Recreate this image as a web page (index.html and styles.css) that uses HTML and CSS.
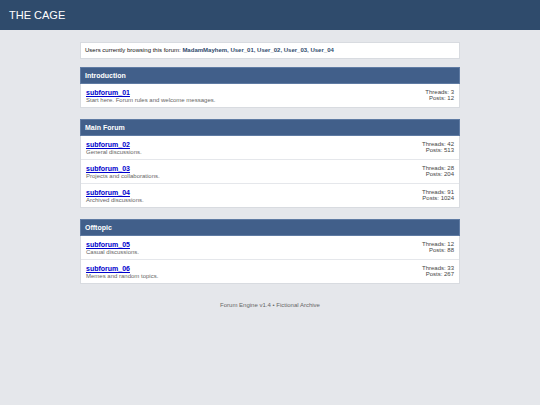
FILE: index.html
```html
<!DOCTYPE html>
<html lang="en">

<head>
    <meta charset="UTF-8">
    <meta name="viewport" content="width=device-width, initial-scale=1.0">
    <title>The Cage</title>
    <link rel="stylesheet" href="styles.css">
</head>

<body>
    <header class="topbar">
        <h1>THE CAGE</h1>
    </header>

    <main class="container">
        <div class="online">
            Users currently browsing this forum: <b>MadamMayhem, User_01, User_02, User_03, User_04</b>
        </div>

        <section class="category">
            <h2>Introduction</h2>
            <div class="forum">
                <div class="info">
                    <a href="#">subforum_01</a>
                    <p>Start here. Forum rules and welcome messages.</p>
                </div>
                <div class="stats">Threads: 3<br>Posts: 12</div>
            </div>
        </section>

        <section class="category">
            <h2>Main Forum</h2>
            <div class="forum">
                <div class="info">
                    <a href="#">subforum_02</a>
                    <p>General discussions.</p>
                </div>
                <div class="stats">Threads: 42<br>Posts: 513</div>
            </div>
            <div class="forum">
                <div class="info">
                    <a href="#">subforum_03</a>
                    <p>Projects and collaborations.</p>
                </div>
                <div class="stats">Threads: 28<br>Posts: 204</div>
            </div>
            <div class="forum">
                <div class="info">
                    <a href="#">subforum_04</a>
                    <p>Archived discussions.</p>
                </div>
                <div class="stats">Threads: 91<br>Posts: 1024</div>
            </div>
        </section>

        <section class="category">
            <h2>Offtopic</h2>
            <div class="forum">
                <div class="info">
                    <a href="#">subforum_05</a>
                    <p>Casual discussions.</p>
                </div>
                <div class="stats">Threads: 12<br>Posts: 88</div>
            </div>
            <div class="forum">
                <div class="info">
                    <a href="#">subforum_06</a>
                    <p>Memes and random topics.</p>
                </div>
                <div class="stats">Threads: 33<br>Posts: 267</div>
            </div>
        </section>
    </main>

    <footer class="footer">Forum Engine v1.4 • Fictional Archive</footer>
</body>

</html>
```
FILE: styles.css
```css
* {
    margin: 0;
    padding: 0;
    box-sizing: border-box;
}

body {
    background: #e5e7eb;
    font-family: Arial, "Liberation Sans", sans-serif;
    font-size: 6px;
    line-height: 7px;
    color: #111;
}

.topbar {
    background: #2f4b6c;
    padding: 8px 9px;
}

.topbar h1 {
    font-size: 11px;
    font-weight: normal;
    line-height: 14px;
    color: #fff;
}

.container {
    width: 90%;
    max-width: 380px;
    margin: 12px auto 0;
}

.online {
    background: #fff;
    border: 1px solid #d8dbe0;
    padding: 4px;
    margin-bottom: 8px;
}

.online b {
    color: #2f4b6c;
}

.category {
    background: #fff;
    border: 1px solid #d8dbe0;
    border-top: 0;
    margin-bottom: 11px;
}

.category h2 {
    background: #415f8a;
    border: 1px solid #5f7ba3;
    margin: 0 -1px;
    padding: 4px;
    font-size: 7px;
    line-height: 7px;
    color: #fff;
}

.forum {
    display: flex;
    justify-content: space-between;
    padding: 5px 5px 3px;
}

.forum + .forum {
    border-top: 1px solid #e5e7eb;
}

.info a {
    display: block;
    font-size: 7px;
    font-weight: bold;
    line-height: 8px;
    color: #0000cc;
}

.info p {
    color: #666;
}

.stats {
    text-align: right;
    line-height: 6px;
    color: #444;
}

.footer {
    padding: 7px;
    text-align: center;
    color: #666;
}
```
